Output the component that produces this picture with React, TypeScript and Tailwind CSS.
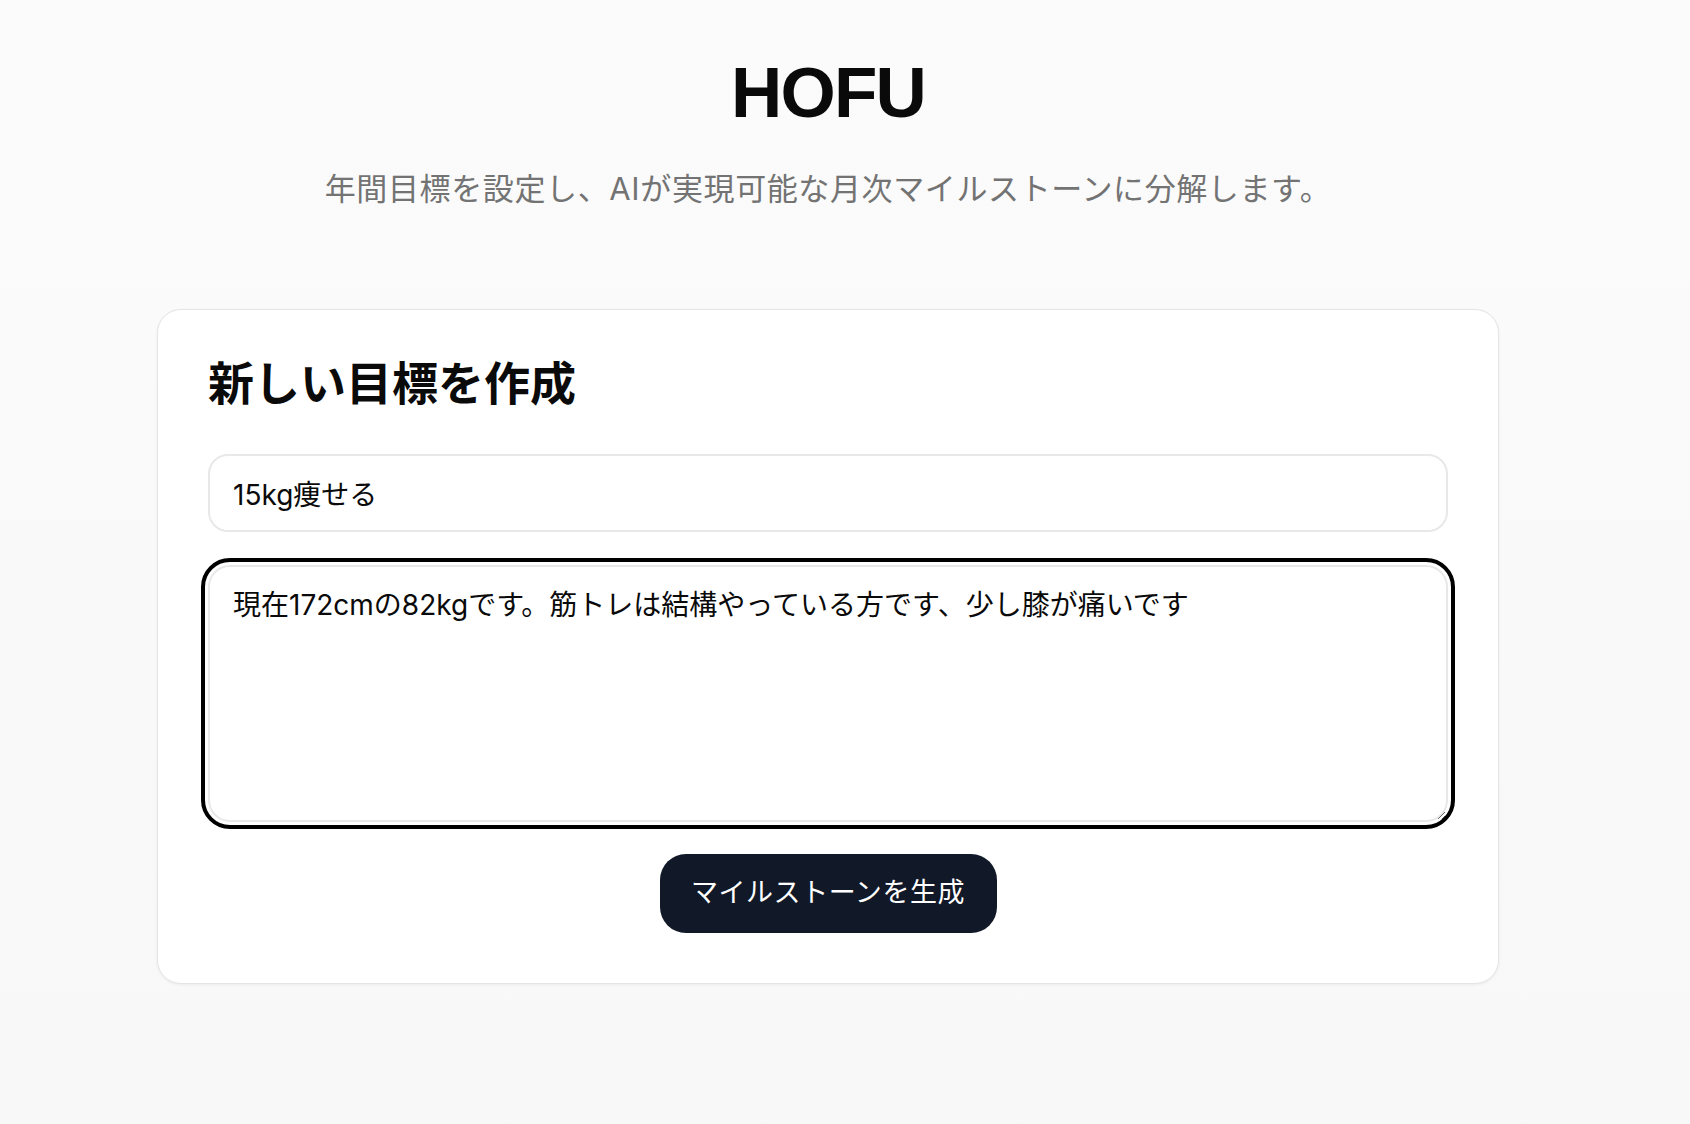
import { useState } from 'react';

const jp = { fontFamily: 'Inter, "Noto Sans CJK JP", sans-serif' };

export default function App() {
  const [title, setTitle] = useState('15kg痩せる');
  const [detail, setDetail] = useState(
    '現在172cmの82kgです。筋トレは結構やっている方です、少し膝が痛いです'
  );

  return (
    <div
      className="min-h-[1124px] w-full bg-gradient-to-b from-[#fbfbfb] to-[#f8f8f8] pr-[34px]"
      style={jp}
    >
      <div className="mx-auto flex w-[1342px] flex-col items-center">
        {/* Header */}
        <h1
          className="mt-[53px] text-[71px] font-bold leading-[80px] tracking-tight text-[#0a0a0a]"
          style={{ fontFamily: '"Liberation Sans", Arial, sans-serif' }}
        >
          HOFU
        </h1>
        <p className="mt-[36px] text-[31px] leading-[40px] tracking-[0.02em] text-[#737373]">
          年間目標を設定し、AIが実現可能な月次マイルストーンに分解します。
        </p>

        {/* Card */}
        <section className="mt-[100px] w-full rounded-[24px] border border-[#e5e5e5] bg-white px-[50px] pb-[50px] pt-[45px] shadow-[0_1px_3px_rgba(0,0,0,0.06)]">
          <h2 className="text-[46px] font-bold leading-[56px] text-[#0a0a0a]">
            新しい目標を作成
          </h2>

          <input
            value={title}
            onChange={e => setTitle(e.target.value)}
            className="mt-[43px] block h-[78px] w-full rounded-[20px] border-2 border-[#e8e8e8] bg-white px-[23px] pb-[1px] text-[28px] text-[#0a0a0a] outline-none"
          />

          <textarea
            value={detail}
            onChange={e => setDetail(e.target.value)}
            className="mt-[33px] block h-[257px] w-full rounded-[22px] border-2 border-[#e8e8e8] bg-white px-[23px] pb-[16px] pt-[18px] text-[28px] leading-[40px] text-[#0a0a0a] outline-[4px] outline-offset-[3px] outline-black outline-solid"
          />

          <div className="mt-[32px] flex justify-center">
            <button className="h-[79px] w-[337px] rounded-[26px] bg-[#111827] text-[27px] tracking-[0.02em] text-white">
              マイルストーンを生成
            </button>
          </div>
        </section>
      </div>
    </div>
  );
}
